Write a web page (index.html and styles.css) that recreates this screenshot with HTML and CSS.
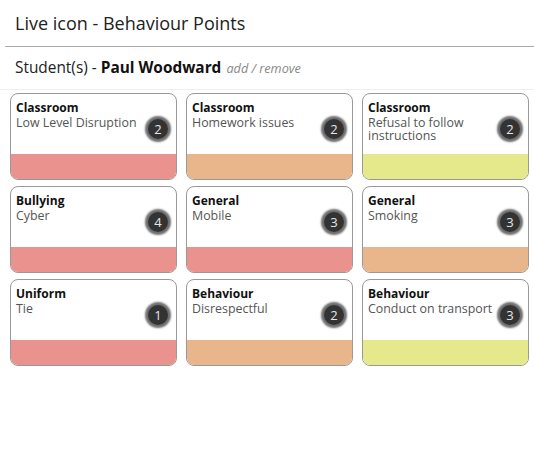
FILE: index.html
```html
<!DOCTYPE html>
<html>
<head>
    <title>Live icon - Behaviour Points</title>
    <link rel="stylesheet" href="styles.css">
</head>
<body>
    <div class="header">
        <h1>Live icon - Behaviour Points</h1>
    </div>

    <div class="student">
        Student(s) - <strong>Paul Woodward</strong> <a class="edit" href="#">add / remove</a>
    </div>

    <div class="cards">
        <div class="card">
            <div class="card-body">
                <div class="card-title">Classroom</div>
                <div class="card-text">Low Level Disruption</div>
                <span class="badge">2</span>
            </div>
            <div class="card-bar red"></div>
        </div>
        <div class="card">
            <div class="card-body">
                <div class="card-title">Classroom</div>
                <div class="card-text">Homework issues</div>
                <span class="badge">2</span>
            </div>
            <div class="card-bar orange"></div>
        </div>
        <div class="card">
            <div class="card-body">
                <div class="card-title">Classroom</div>
                <div class="card-text">Refusal to follow instructions</div>
                <span class="badge">2</span>
            </div>
            <div class="card-bar yellow"></div>
        </div>

        <div class="card">
            <div class="card-body">
                <div class="card-title">Bullying</div>
                <div class="card-text">Cyber</div>
                <span class="badge">4</span>
            </div>
            <div class="card-bar red"></div>
        </div>
        <div class="card">
            <div class="card-body">
                <div class="card-title">General</div>
                <div class="card-text">Mobile</div>
                <span class="badge">3</span>
            </div>
            <div class="card-bar red"></div>
        </div>
        <div class="card">
            <div class="card-body">
                <div class="card-title">General</div>
                <div class="card-text">Smoking</div>
                <span class="badge">3</span>
            </div>
            <div class="card-bar orange"></div>
        </div>

        <div class="card">
            <div class="card-body">
                <div class="card-title">Uniform</div>
                <div class="card-text">Tie</div>
                <span class="badge">1</span>
            </div>
            <div class="card-bar red"></div>
        </div>
        <div class="card">
            <div class="card-body">
                <div class="card-title">Behaviour</div>
                <div class="card-text">Disrespectful</div>
                <span class="badge">2</span>
            </div>
            <div class="card-bar orange"></div>
        </div>
        <div class="card">
            <div class="card-body">
                <div class="card-title">Behaviour</div>
                <div class="card-text">Conduct on transport</div>
                <span class="badge">3</span>
            </div>
            <div class="card-bar yellow"></div>
        </div>
    </div>
</body>
</html>
```

FILE: styles.css
```css
body {
    font-family: 'Open Sans', 'Liberation Sans', sans-serif;
    margin: 0;
    background-color: white;
    color: #222;
}
.header {
    margin-left: 5px;
    padding: 11px 10px 11px;
    border-bottom: 1px solid #aaa;
}
h1 {
    margin: 0;
    font-size: 18px;
    font-weight: normal;
    line-height: 24px;
    color: #222;
}
.student {
    padding: 10px 15px 10px;
    font-size: 15.4px;
    line-height: 21px;
    border-bottom: 1px solid #eee;
}
.student strong {
    color: #111;
}
.edit {
    font-size: 12.7px;
    font-style: italic;
    color: #888;
    text-decoration: none;
    margin-left: 1px;
}
.cards {
    display: grid;
    grid-template-columns: repeat(3, 167px);
    column-gap: 9px;
    row-gap: 6px;
    padding: 3px 5px 0 10px;
}
.card {
    display: flex;
    flex-direction: column;
    height: 87px;
    box-sizing: border-box;
    border: 1px solid #999;
    border-radius: 8px;
    overflow: hidden;
}
.card-body {
    position: relative;
    flex: 1;
    padding: 6px 5px 5px;
}
.card-title {
    font-size: 12px;
    font-weight: bold;
    line-height: 16px;
    color: #111;
}
.card-text {
    font-size: 12.4px;
    line-height: 13px;
    color: #555;
}
.card-bar {
    height: 25px;
}
.card-bar.red {
    background-color: #e9928e;
}
.card-bar.orange {
    background-color: #e9b68b;
}
.card-bar.yellow {
    background-color: #e5e88b;
}
.badge {
    position: absolute;
    top: 25px;
    right: 8px;
    width: 20px;
    height: 20px;
    border-radius: 50%;
    background-color: #333;
    color: #e6e6e6;
    font-size: 13px;
    line-height: 20px;
    text-align: center;
    box-shadow: 0 0 2px 3px #6e6e6e;
}
```
